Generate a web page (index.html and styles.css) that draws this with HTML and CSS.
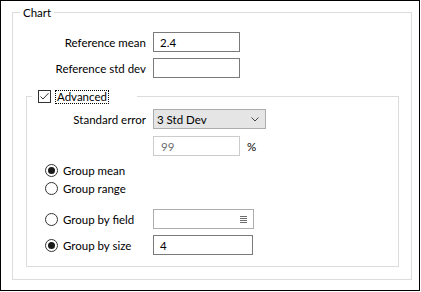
FILE: index.html
```html
<html>
    <head>
        <meta charset="utf-8">
        <title>Chart</title>
        <link rel="stylesheet" href="styles.css">
    </head>
    <body>
        <div class="window">
            <fieldset class="group">
                <legend class="group-title">Chart</legend>

                <div class="form-row">
                    <span class="field-label">Reference mean</span>
                    <span class="text-box">2.4</span>
                </div>
                <div class="form-row">
                    <span class="field-label">Reference std dev</span>
                    <span class="text-box"></span>
                </div>

                <fieldset class="group group-inner">
                    <legend class="check-legend">
                        <span class="check-box">
                            <svg width="13" height="13" viewBox="0 0 13 13">
                                <rect x="0.5" y="0.5" width="12" height="12" fill="#fff" stroke="#333"/>
                                <polyline points="2.5,6.5 5,9 10.5,3.2" fill="none" stroke="#333" stroke-width="1"/>
                            </svg>
                        </span>
                        <span class="focus-text">Advanced</span>
                    </legend>

                    <div class="form-row">
                        <span class="field-label inner-label">Standard error</span>
                        <span class="combo-box">3 Std Dev
                            <svg class="combo-arrow" width="8" height="5" viewBox="0 0 8 5">
                                <polyline points="0.5,0.5 4,4 7.5,0.5" fill="none" stroke="#444"/>
                            </svg>
                        </span>
                    </div>
                    <div class="form-row row-confidence">
                        <span class="field-label inner-label"></span>
                        <span class="text-box disabled">99</span>
                        <span class="unit">%</span>
                    </div>

                    <div class="radio-row row-mean">
                        <span class="radio checked"></span>
                        <span>Group mean</span>
                    </div>
                    <div class="radio-row">
                        <span class="radio"></span>
                        <span>Group range</span>
                    </div>

                    <div class="form-row row-field">
                        <span class="field-label inner-label radio-label">
                            <span class="radio"></span>
                            <span>Group by field</span>
                        </span>
                        <span class="text-box field-picker">
                            <span class="list-icon"><i></i><i></i><i></i><i></i></span>
                        </span>
                    </div>
                    <div class="form-row">
                        <span class="field-label inner-label radio-label">
                            <span class="radio checked"></span>
                            <span>Group by size</span>
                        </span>
                        <span class="text-box size-box">4</span>
                    </div>
                </fieldset>
            </fieldset>
        </div>
    </body>
</html>
```

FILE: styles.css
```css
*  {
    box-sizing: border-box;
}

body  {
    margin: 0;
    background-color: #ffffff;
    font-family: Lato, "Noto Sans", sans-serif;
    font-size: 11.5px;
    color: #000000;
}

.window  {
    width: 420px;
    height: 291px;
    border: 1px solid #000000;
    padding: 4px 0 0 11px;
}

.group  {
    width: 400px;
    min-width: 0;
    margin: 0;
    padding: 12px 0 12px 0;
    border: 1px solid #dcdcdc;
}

.group-title  {
    height: 15px;
    line-height: 15px;
    margin-left: 7px;
    padding: 0 3px;
}

.form-row  {
    display: flex;
    align-items: center;
    height: 20px;
    gap: 7px;
}

.form-row + .form-row  {
    margin-top: 6px;
}

.field-label  {
    width: 133px;
    text-align: right;
    flex-shrink: 0;
}

.inner-label  {
    width: 119px;
}

.text-box  {
    display: flex;
    align-items: center;
    width: 87px;
    height: 20px;
    border: 1px solid #7a7a7a;
    padding: 0 6px;
}

.text-box.disabled  {
    border-color: #cccccc;
    color: #6d6d6d;
    padding-left: 7px;
}

/* inner group: Advanced */
.group-inner  {
    width: 373px;
    margin: 11px 0 0 13px;
    padding: 5px 0 11px 0;
}

.check-legend  {
    display: flex;
    align-items: center;
    width: 105px;
    height: 15px;
    margin-left: 5px;
    padding: 0;
}

.check-box  {
    display: flex;
    margin-left: 6px;
    margin-right: 4px;
}

.focus-text  {
    height: 14px;
    line-height: 12px;
    padding: 0 1px;
    border: 1px dotted #000000;
}

.combo-box  {
    display: flex;
    align-items: center;
    justify-content: space-between;
    width: 113px;
    height: 20px;
    border: 1px solid #adadad;
    background-color: #e5e5e5;
    padding: 0 6px 0 3px;
}

.row-confidence  {
    margin-top: 7px !important;
}

.radio-row  {
    display: flex;
    align-items: center;
    gap: 5px;
    height: 18px;
    padding-left: 18px;
}

.row-mean  {
    margin-top: 5px;
}

.radio-label  {
    display: flex;
    align-items: center;
    gap: 5px;
    padding-left: 18px;
    text-align: left;
}

.radio  {
    position: relative;
    display: inline-block;
    width: 13px;
    height: 13px;
    border: 1px solid #333333;
    border-radius: 50%;
    background-color: #ffffff;
    flex-shrink: 0;
}

.radio.checked::after  {
    content: "";
    position: absolute;
    left: 2px;
    top: 2px;
    width: 7px;
    height: 7px;
    border-radius: 50%;
    background-color: #1a1a1a;
}

.row-field  {
    margin-top: 12px;
}

.field-picker  {
    width: 101px;
    border-color: #adadad;
    justify-content: flex-end;
    padding-right: 6px;
}

.list-icon  {
    display: flex;
    flex-direction: column;
    gap: 1px;
    width: 7px;
}

.list-icon i  {
    display: block;
    height: 1px;
    background-color: #6d6d6d;
}

.size-box  {
    width: 100px;
}
```
